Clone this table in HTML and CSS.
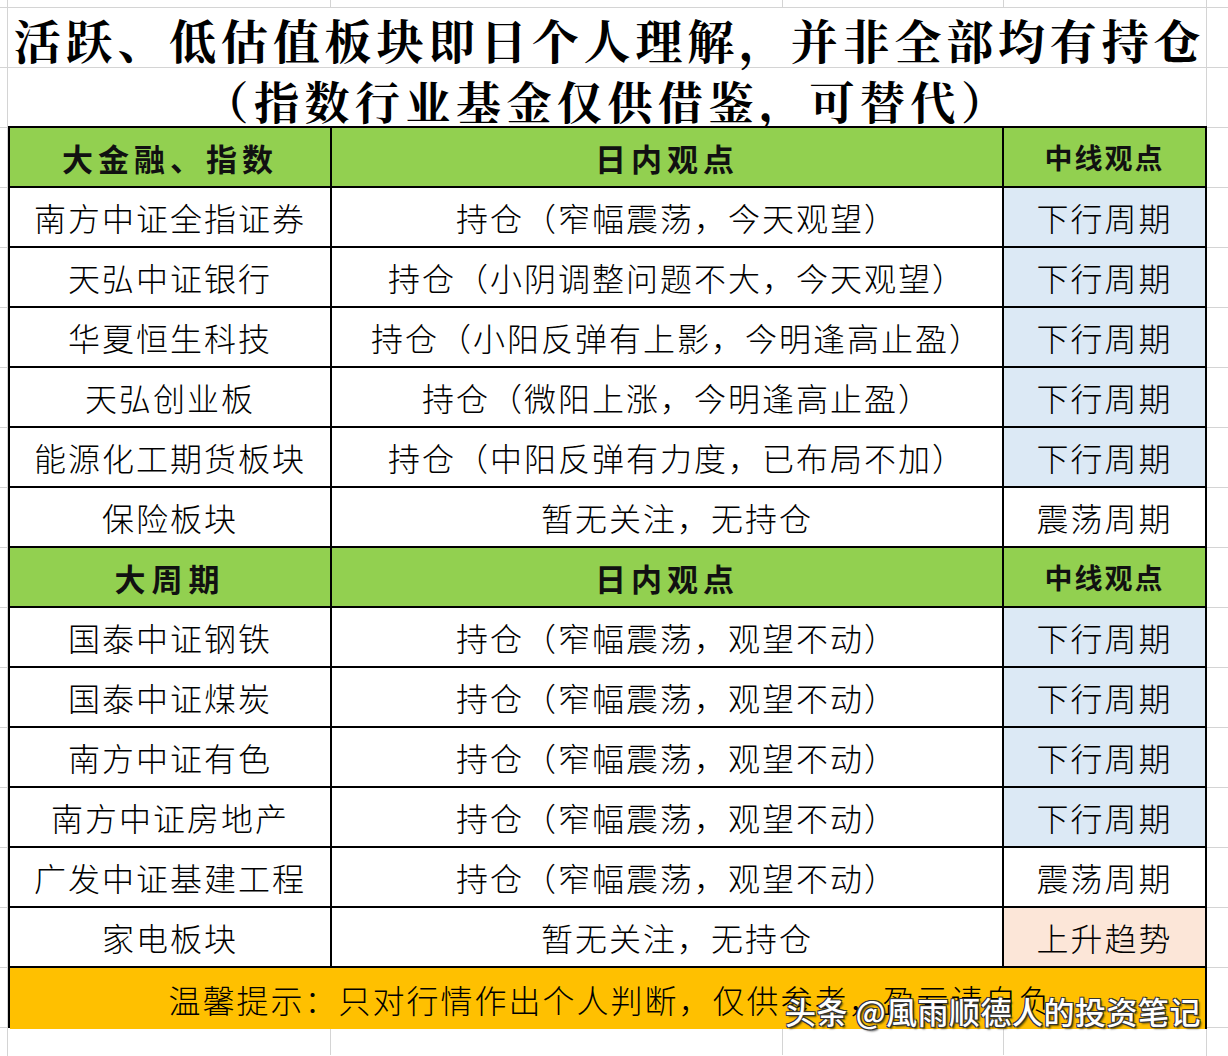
FILE: index.html
```html
<!DOCTYPE html>
<html lang="zh-CN">
<head>
<meta charset="utf-8">
<title>活跃、低估值板块</title>
<link rel="stylesheet" href="styles.css">
</head>
<body>
<div class="sheet">
  <div class="strip">
    <span class="gc g0"></span><span class="gc g1"></span><span class="gc g2"></span><span class="gc g3"></span><span class="gc g4"></span><span class="gc g5"></span>
  </div>
  <div class="title t1">活跃、低估值板块即日个人理解，并非全部均有持仓</div>
  <div class="title t2">（指数行业基金仅供借鉴，可替代）</div>

  <div class="table">
    <div class="c head h1">大金融、指数</div>
    <div class="c head">日内观点</div>
    <div class="c head h3">中线观点</div>

    <div class="c">南方中证全指证券</div>
    <div class="c mid">持仓（窄幅震荡，今天观望）</div>
    <div class="c blue">下行周期</div>

    <div class="c">天弘中证银行</div>
    <div class="c mid">持仓（小阴调整问题不大，今天观望）</div>
    <div class="c blue">下行周期</div>

    <div class="c">华夏恒生科技</div>
    <div class="c mid">持仓（小阳反弹有上影，今明逢高止盈）</div>
    <div class="c blue">下行周期</div>

    <div class="c">天弘创业板</div>
    <div class="c mid">持仓（微阳上涨，今明逢高止盈）</div>
    <div class="c blue">下行周期</div>

    <div class="c">能源化工期货板块</div>
    <div class="c mid">持仓（中阳反弹有力度，已布局不加）</div>
    <div class="c blue">下行周期</div>

    <div class="c">保险板块</div>
    <div class="c mid">暂无关注，无持仓</div>
    <div class="c">震荡周期</div>

    <div class="c head h1 wide">大周期</div>
    <div class="c head">日内观点</div>
    <div class="c head h3">中线观点</div>

    <div class="c">国泰中证钢铁</div>
    <div class="c mid">持仓（窄幅震荡，观望不动）</div>
    <div class="c blue">下行周期</div>

    <div class="c">国泰中证煤炭</div>
    <div class="c mid">持仓（窄幅震荡，观望不动）</div>
    <div class="c blue">下行周期</div>

    <div class="c">南方中证有色</div>
    <div class="c mid">持仓（窄幅震荡，观望不动）</div>
    <div class="c blue">下行周期</div>

    <div class="c">南方中证房地产</div>
    <div class="c mid">持仓（窄幅震荡，观望不动）</div>
    <div class="c blue">下行周期</div>

    <div class="c">广发中证基建工程</div>
    <div class="c mid">持仓（窄幅震荡，观望不动）</div>
    <div class="c">震荡周期</div>

    <div class="c">家电板块</div>
    <div class="c mid">暂无关注，无持仓</div>
    <div class="c peach">上升趋势</div>

    <div class="c foot"><span class="foot-text">温馨提示：只对行情作出个人判断，仅供参考，盈亏请自负</span>
      <span class="watermark">头条 @風雨顺德人的投资笔记</span>
    </div>
  </div>

  <div class="strip bottom">
    <span class="gc g0"></span><span class="gc g1"></span><span class="gc g2"></span><span class="gc g3"></span><span class="gc g4"></span><span class="gc g5"></span>
  </div>
</div>
</body>
</html>
```

FILE: styles.css
```css
* { box-sizing: border-box; }

html, body {
  margin: 0;
  padding: 0;
  background: #ffffff;
}

.sheet {
  width: 1228px;
  height: 1056px;
  overflow: hidden;
  font-family: "Noto Sans CJK SC", "Noto Sans", sans-serif;
  color: #000;
  background-color: #fff;
  background-image:
    linear-gradient(to right, transparent 7px, #d4d4d4 7px, #d4d4d4 8px, transparent 8px),
    linear-gradient(to right, transparent 1206px, #d4d4d4 1206px, #d4d4d4 1207px, transparent 1207px),
    repeating-linear-gradient(to bottom, transparent 0, transparent 59px, #d4d4d4 59px, #d4d4d4 60px);
  background-position: 0 0, 0 0, 0 8px;
  background-repeat: no-repeat, no-repeat, repeat;
  background-size: 1228px 1056px, 1228px 1056px, 1228px 60px;
}

/* spreadsheet grid strip (top and bottom) */
.strip {
  display: flex;
  height: 8px;
}
.strip.bottom { height: 27px; background: #fff; }
.gc { display: block; height: 100%; border-right: 1px solid #d4d4d4; }
.g0 { width: 8px; }
.g1 { width: 323px; }
.g2 { width: 452px; }
.g3 { width: 221px; }
.g4 { width: 203px; }
.g5 { flex: 1; border-right: none; }

/* title rows */
.title {
  width: 1207px;
  text-align: center;
  font-family: "Noto Serif CJK SC", "Noto Sans CJK SC", serif;
  font-weight: 700;
  white-space: nowrap;
  line-height: 1;
}
.t1 {
  height: 60px;
  font-size: 47px;
  letter-spacing: 4.8px;
  padding-top: 7px;
  padding-left: 12px;
}
.t2 {
  height: 58px;
  font-size: 45px;
  letter-spacing: 5.5px;
  padding-top: 10px;
  padding-left: 8px;
}

/* table */
.table {
  margin-left: 8px;
  width: 1199px;
  display: grid;
  grid-template-columns: 322px 672px 203px;
  grid-auto-rows: 60px;
  border-top: 2px solid #000;
  border-left: 2px solid #000;
  background: #fff;
  position: relative;
}

.c {
  display: flex;
  align-items: center;
  justify-content: center;
  border-right: 2px solid #000;
  border-bottom: 2px solid #000;
  font-size: 32px;
  font-weight: 300;
  letter-spacing: 2px;
  white-space: nowrap;
  padding-top: 0;
  background: #fff;
}

.mid { padding-left: 20px; }

.head {
  background: #92d050;
  font-weight: 700;
  font-size: 31px;
  letter-spacing: 5px;
  color: #111;
}
.h3 { font-size: 28px; letter-spacing: 2px; }
.wide { letter-spacing: 6px; }

.blue { background: #dce9f5; }
.peach { background: #fce6d8; }

.foot {
  grid-column: 1 / 4;
  height: 61px;
  border-bottom: none;
  background: #ffc000;
  position: relative;
  font-size: 32px;
  letter-spacing: 2px;
  padding-left: 6px;
}

.watermark {
  position: absolute;
  left: 775px;
  top: 20px;
  font-family: "Noto Sans CJK SC", sans-serif;
  font-weight: 500;
  font-size: 31px;
  letter-spacing: 0.5px;
  color: #fff;
  text-shadow: 1px 1px 0 #333, -1px 1px 0 #333, 1px -1px 0 #333, -1px -1px 0 #333, 2px 2px 2px rgba(0,0,0,0.6);
}
```
